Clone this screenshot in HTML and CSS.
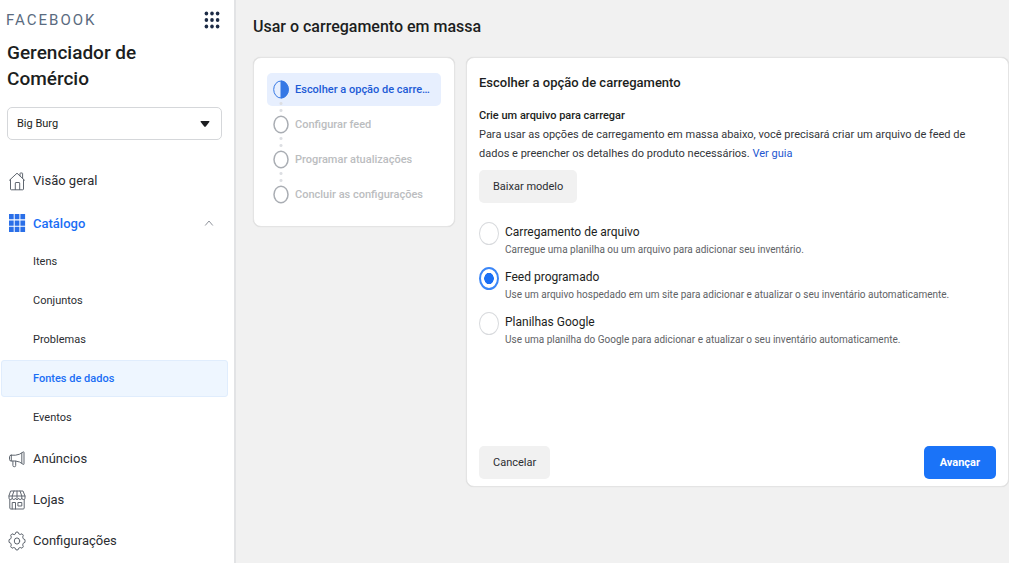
FILE: index.html
```html
<!DOCTYPE html>
<html lang="pt-BR">

<head>
    <meta charset="UTF-8">
    <meta name="viewport" content="width=device-width, initial-scale=1.0">
    <title>Gerenciador de Comércio</title>
    <link rel="stylesheet" href="styles.css">
</head>

<body>
    <div class="app">
        <aside class="sidebar">
            <div class="brand-row">
                <span class="brand">FACEBOOK</span>
                <button class="apps-button" type="button" aria-label="Aplicativos">
                    <svg width="16" height="18" viewBox="0 0 16 18" fill="#1c2b45">
                        <ellipse cx="2.4" cy="2.5" rx="1.8" ry="2" />
                        <ellipse cx="8" cy="2.5" rx="1.8" ry="2" />
                        <ellipse cx="13.6" cy="2.5" rx="1.8" ry="2" />
                        <ellipse cx="2.4" cy="9" rx="1.8" ry="2" />
                        <ellipse cx="8" cy="9" rx="1.8" ry="2" />
                        <ellipse cx="13.6" cy="9" rx="1.8" ry="2" />
                        <ellipse cx="2.4" cy="15.5" rx="1.8" ry="2" />
                        <ellipse cx="8" cy="15.5" rx="1.8" ry="2" />
                        <ellipse cx="13.6" cy="15.5" rx="1.8" ry="2" />
                    </svg>
                </button>
            </div>
            <h1>Gerenciador de Comércio</h1>
            <div class="select-box">
                <select class="catalog-select" aria-label="Catálogo">
                    <option>Big Burg</option>
                </select>
                <svg class="select-arrow" width="10" height="6" viewBox="0 0 10 6">
                    <path d="M1.2 0h7.6q1.2 0 .5 1L5.8 5.4q-.8.8-1.6 0L.7 1Q0 0 1.2 0z" fill="#1c1e21" />
                </svg>
            </div>

            <nav class="nav">
                <a class="nav-item" href="#">
                    <svg class="nav-icon" viewBox="0 0 18 20">
                        <path d="M1.5 9.2L9 2.2l7.5 7M2.5 8.5V18q0 .8.8.8h11.4q.8 0 .8-.8V8.5M12 4.8V2.5q0-.5.5-.5h1.6q.5 0 .5.5v4.7M7.3 18.6V12q0-.5.5-.5h3.4q.5 0 .5.5v6.6" />
                    </svg>
                    Visão geral
                </a>
                <a class="nav-item open" href="#">
                    <svg class="nav-icon solid" viewBox="0 0 18 20">
                        <path d="M1 1h4.7v5.3H1zM6.7 1h4.7v5.3H6.7zM12.4 1h4.7v5.3h-4.7zM1 7.4h4.7v5.3H1zM6.7 7.4h4.7v5.3H6.7zM12.4 7.4h4.7v5.3h-4.7zM1 13.8h4.7v5.3H1zM6.7 13.8h4.7v5.3H6.7zM12.4 13.8h4.7v5.3h-4.7z" />
                    </svg>
                    Catálogo
                    <svg class="chevron" width="10" height="8" viewBox="0 0 10 8">
                        <path d="M1.2 6.5L5 2l3.8 4.5" />
                    </svg>
                </a>
                <a class="sub-item" href="#">Itens</a>
                <a class="sub-item" href="#">Conjuntos</a>
                <a class="sub-item" href="#">Problemas</a>
                <a class="sub-item active" href="#">Fontes de dados</a>
                <a class="sub-item" href="#">Eventos</a>
                <a class="nav-item" href="#">
                    <svg class="nav-icon" viewBox="0 0 18 20">
                        <path d="M3.2 6.2h4.3q4.3-.4 7.6-3.2q.9-.5.9.5v11.3q0 1-.9.5q-3.3-2.9-7.6-3.3H3.2q-1.7 0-1.7-1.5V7.7q0-1.5 1.7-1.5zM3.3 6.3v5.6M4.9 12.2v4.3q.1 1.2 1 1.2h.8q1 0 1-1.2v-4.3M13.8 4.2v9.8" />
                    </svg>
                    Anúncios
                </a>
                <a class="nav-item" href="#">
                    <svg class="nav-icon" viewBox="0 0 18 20">
                        <path d="M3 1h12l2 5v2.3q-.2 1.2-1.6 1.2q-1.4 0-1.6-1.2q-.2 1.2-1.6 1.2T10.6 8.3Q10.4 9.5 9 9.5T7.4 8.3Q7.2 9.5 5.8 9.5T4.2 8.3Q4 9.5 2.6 9.5T1 8.3V6zM1 6h16M6 1L4.2 6v2.3M9 1v7.3M12 1l1.8 5v2.3M1.8 9.5V18q0 1 1 1h12.4q1 0 1-1V9.5M4.2 19v-6.5h3.3V19M10.3 12.5h3.5v3.5h-3.5z" />
                    </svg>
                    Lojas
                </a>
                <a class="nav-item" href="#">
                    <svg class="nav-icon" viewBox="0 0 18 20">
                        <path d="M7.3 2.8L8 1.1h2l.7 1.7 1.5.7 1.8-.7 1.3 1.4-.6 1.9.6 1.7 1.7.9v2.6l-1.7.9-.6 1.7.6 1.9-1.3 1.4-1.8-.7-1.5.7-.7 1.7H8l-.7-1.7-1.5-.7-1.8.7-1.3-1.4.6-1.9-.6-1.7L1 11.3V8.7l1.7-.9.6-1.7-.6-1.9L4 2.8l1.8.7z" />
                        <ellipse cx="9" cy="10" rx="2.7" ry="3.1" />
                    </svg>
                    Configurações
                </a>
            </nav>
        </aside>

        <main class="main">
            <h2>Usar o carregamento em massa</h2>
            <div class="columns">
                <ol class="card steps">
                    <li class="step current">
                        <svg class="step-icon" viewBox="0 0 16 19">
                            <ellipse cx="8" cy="9.5" rx="7.3" ry="8.5" />
                            <path d="M8 1a7.3 8.5 0 0 1 0 17z" />
                        </svg>
                        <span>Escolher a opção de carregamento</span>
                    </li>
                    <li class="step">
                        <svg class="step-icon" viewBox="0 0 16 19">
                            <ellipse cx="8" cy="9.5" rx="7" ry="8.3" />
                        </svg>
                        <span>Configurar feed</span>
                    </li>
                    <li class="step">
                        <svg class="step-icon" viewBox="0 0 16 19">
                            <ellipse cx="8" cy="9.5" rx="7" ry="8.3" />
                        </svg>
                        <span>Programar atualizações</span>
                    </li>
                    <li class="step">
                        <svg class="step-icon" viewBox="0 0 16 19">
                            <ellipse cx="8" cy="9.5" rx="7" ry="8.3" />
                        </svg>
                        <span>Concluir as configurações</span>
                    </li>
                </ol>

                <form class="card panel">
                    <h3>Escolher a opção de carregamento</h3>
                    <h4>Crie um arquivo para carregar</h4>
                    <p class="intro">Para usar as opções de carregamento em massa abaixo, você precisará criar um arquivo de feed de dados e preencher os detalhes do produto necessários. <a href="#">Ver guia</a></p>
                    <button class="button" type="button">Baixar modelo</button>

                    <div class="options">
                        <label class="option">
                            <input type="radio" name="source">
                            <span class="option-text">
                                <span class="option-title">Carregamento de arquivo</span>
                                <span class="option-hint">Carregue uma planilha ou um arquivo para adicionar seu inventário.</span>
                            </span>
                        </label>
                        <label class="option">
                            <input type="radio" name="source" checked>
                            <span class="option-text">
                                <span class="option-title">Feed programado</span>
                                <span class="option-hint">Use um arquivo hospedado em um site para adicionar e atualizar o seu inventário automaticamente.</span>
                            </span>
                        </label>
                        <label class="option">
                            <input type="radio" name="source">
                            <span class="option-text">
                                <span class="option-title">Planilhas Google</span>
                                <span class="option-hint">Use uma planilha do Google para adicionar e atualizar o seu inventário automaticamente.</span>
                            </span>
                        </label>
                    </div>

                    <div class="actions">
                        <button class="button" type="button">Cancelar</button>
                        <button class="button primary" type="submit">Avançar</button>
                    </div>
                </form>
            </div>
        </main>
    </div>
</body>

</html>
```
FILE: styles.css
```css
* {
    box-sizing: border-box;
}

body {
    font-family: Roboto, "Liberation Sans", sans-serif;
    font-size: 11px;
    color: #1c1e21;
    background-color: #f1f1f1;
    margin: 0;
}

h1,
h2,
h3,
h4,
p {
    margin: 0;
    font-weight: 500;
}

a {
    color: #2457d0;
    text-decoration: none;
}

.app {
    display: flex;
    min-height: 100vh;
}

/* Sidebar */

.sidebar {
    flex: 0 0 236px;
    background-color: #ffffff;
    border-right: 2px solid #e2e3e5;
}

.brand-row {
    display: flex;
    align-items: center;
    justify-content: space-between;
    height: 40px;
    padding: 0 14px 0 6px;
}

.brand {
    font-size: 15px;
    letter-spacing: 2px;
    color: #5a6b80;
}

.apps-button {
    display: flex;
    padding: 0;
    border: 0;
    background: none;
}

h1 {
    padding: 0 60px 0 7px;
    font-size: 19px;
    line-height: 26px;
}

.select-box {
    position: relative;
    margin: 15px 12px 0 7px;
}

.catalog-select {
    display: block;
    appearance: none;
    width: 100%;
    height: 33px;
    padding: 0 9px;
    border: 1px solid #d5d7da;
    border-radius: 5px;
    background-color: #ffffff;
    font: inherit;
    color: inherit;
}

.select-arrow {
    position: absolute;
    top: 14px;
    right: 12px;
    pointer-events: none;
}

.nav {
    margin-top: 20px;
}

.nav-item {
    display: flex;
    align-items: center;
    gap: 7px;
    height: 41px;
    padding: 0 20px 0 8px;
    font-size: 13px;
    color: #2b2d31;
}

.nav-item.open {
    height: 42px;
    margin-top: 1px;
    margin-bottom: -1px;
    font-weight: 500;
    color: #1a6ef5;
}

.nav-icon {
    width: 18px;
    height: 20px;
    fill: none;
    stroke: #606770;
    stroke-width: 1;
    stroke-linejoin: round;
    stroke-linecap: round;
}

.nav-icon.solid {
    fill: #2a6fe8;
    stroke: none;
}

.chevron {
    margin-left: auto;
    fill: none;
    stroke: #90949c;
}

.sub-item {
    display: flex;
    align-items: center;
    height: 37px;
    margin: 0 6px 2px 1px;
    padding-left: 31px;
    border: 1px solid transparent;
    border-radius: 3px;
    color: #2b2d31;
}

.sub-item.active {
    background-color: #eef6ff;
    border-color: #e0edfd;
    font-weight: 500;
    color: #1a6ef5;
}

/* Main area */

.main {
    flex: 1;
    min-width: 0;
    padding-left: 17px;
}

h2 {
    padding: 15px 0 18px;
    font-size: 16px;
    line-height: 24px;
}

.columns {
    display: flex;
    align-items: flex-start;
    gap: 11px;
}

.card {
    background-color: #ffffff;
    border: 1px solid #e4e4e4;
    border-radius: 8px;
    box-shadow: 0 0 1px rgba(0, 0, 0, 0.15);
}

.steps {
    flex: none;
    width: 202px;
    margin: 0;
    padding: 15px 13px;
    list-style: none;
}

.step {
    position: relative;
    display: flex;
    align-items: center;
    gap: 6px;
    height: 33px;
    margin-bottom: 2px;
    padding: 0 6px;
    border-radius: 5px;
    font-weight: 500;
    color: #bbbdc0;
}

.step:last-child {
    margin-bottom: 0;
}

.step span {
    overflow: hidden;
    text-overflow: ellipsis;
    white-space: nowrap;
}

.step.current {
    background-color: #e7effe;
    color: #1d5bd6;
}

/* dots between two steps */
.step:not(:last-child)::after {
    content: "";
    position: absolute;
    left: 12px;
    top: 27px;
    width: 4px;
    height: 14px;
    background: radial-gradient(circle, #dcdee2 1px, transparent 2px) 0 0 / 4px 7px;
}

.step-icon {
    flex: 0 0 16px;
    height: 19px;
    fill: #ffffff;
    stroke: #a9adb3;
    stroke-width: 1.5;
}

.step.current .step-icon {
    fill: #e7effe;
    stroke: #3578e5;
    stroke-width: 1;
}

.step.current .step-icon path {
    fill: #3578e5;
}

.panel {
    flex: 1;
    min-width: 0;
    padding: 15px 12px 7px;
}

h3 {
    font-size: 13px;
    line-height: 20px;
}

h4 {
    margin-top: 13px;
    font-size: 11px;
    line-height: 19px;
}

.intro {
    font-weight: 400;
    line-height: 19px;
    margin-bottom: 7px;
    color: #33363a;
}

.button {
    height: 33px;
    padding: 0 14px;
    border: 0;
    border-radius: 5px;
    background-color: #f1f1f1;
    font: inherit;
    color: #2b2d31;
}

.button.primary {
    padding: 0 16px;
    background-color: #1a73f8;
    font-weight: 700;
    color: #ffffff;
}

.options {
    margin-top: 19px;
}

.option {
    display: flex;
    align-items: flex-start;
    gap: 6px;
    min-height: 45px;
}

.option input {
    flex: 0 0 20px;
    appearance: none;
    height: 23px;
    margin: 0;
    border: 1px solid #d8dadd;
    border-radius: 50%;
    background-color: #ffffff;
}

.option input:checked {
    border: 2px solid #3b86f7;
    background: radial-gradient(ellipse 5px 6px, #1a6ff5 90%, #ffffff 100%);
}

.option-title,
.option-hint {
    display: block;
}

.option-title {
    font-size: 12px;
    line-height: 20px;
}

.option-hint {
    font-size: 10px;
    line-height: 15px;
    color: #606265;
}

.actions {
    display: flex;
    justify-content: space-between;
    margin-top: 89px;
}
```
